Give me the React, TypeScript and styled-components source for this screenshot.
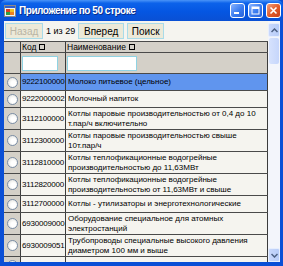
import React from 'react'
import styled, { createGlobalStyle } from 'styled-components'

const Global = createGlobalStyle`
  html, body { margin: 0; padding: 0; background: #fff; }
  body { font-family: "Liberation Sans", Arial, sans-serif; }
`

const rows = [
  { code: '9222100000', name: 'Молоко питьевое (цельное)', selected: true },
  { code: '9222000002', name: 'Молочный напиток' },
  { code: '3112100000', name: 'Котлы паровые производительностью от 0,4 до 10 т.пар/ч включительно' },
  { code: '3112300000', name: 'Котлы паровые производительностью свыше 10т.пар/ч' },
  { code: '3112810000', name: 'Котлы теплофикационные водогрейные производительностью до 11,63МВт' },
  { code: '3112820000', name: 'Котлы теплофикационные водогрейные производительностью от 11,63МВт и свыше' },
  { code: '3112700000', name: 'Котлы - утилизаторы и энерготехнологические' },
  { code: '6930009000', name: 'Оборудование специальное для атомных электростанций' },
  { code: '6930009051', name: 'Трубопроводы специальные высокого давления диаметром 100 мм и выше' },
  { code: '', name: '' },
]

const Window = styled.div`
  width: 283px;
  height: 266px;
  display: flex;
  flex-direction: column;
  background: #0a4fd6;
  overflow: hidden;
`

const TitleBar = styled.div`
  height: 21px;
  flex: none;
  display: flex;
  align-items: center;
  padding: 0 2px 0 4px;
  gap: 3px;
  background: linear-gradient(#4a94f8 0%, #0c62ea 15%, #0556e2 55%, #0a50d4 100%);
  border-radius: 6px 6px 0 0;
`

const Title = styled.div`
  flex: 1;
  color: #fff;
  font-family: "Liberation Sans", Arial, sans-serif;
  font-weight: bold;
  font-size: 10px;
  letter-spacing: -0.45px;
  text-shadow: 1px 1px 0 #0b2f8a;
  white-space: nowrap;
`

const CaptionButton = styled.div<{ $close?: boolean }>`
  width: 15px;
  height: 15px;
  flex: none;
  border: 1px solid #fff;
  border-radius: 3px;
  box-sizing: border-box;
  background: ${(p) =>
    p.$close
      ? 'linear-gradient(135deg, #f0a080, #e05a28 55%, #c8401a)'
      : 'linear-gradient(135deg, #8ab4ff, #3a7cf0 55%, #2a62d8)'};
  display: flex;
  align-items: center;
  justify-content: center;
`

const Body = styled.div`
  flex: 1;
  display: flex;
  padding: 0 3px 4px 4px;
  min-height: 0;
`

const Content = styled.div`
  flex: 1;
  background: #f5f4ef;
  display: flex;
  flex-direction: column;
  min-width: 0;
`

const Toolbar = styled.div`
  height: 20px;
  flex: none;
  display: flex;
  align-items: center;
  padding: 0 0 0 1px;
  gap: 3px;
`

const ToolButton = styled.div<{ $disabled?: boolean; $w: number }>`
  width: ${(p) => p.$w}px;
  height: 16px;
  box-sizing: border-box;
  border: 1px solid #a9dbe8;
  background: #ece9d8;
  color: ${(p) => (p.$disabled ? '#b9b4a4' : '#000')};
  font-size: 10px;
  display: flex;
  align-items: center;
  justify-content: center;
`

const Counter = styled.span`
  font-size: 9px;
  color: #000;
  white-space: nowrap;
`

const Grid = styled.div`
  flex: 1;
  overflow: hidden;
  background: #f5f4ef;
  font-size: 8px;
  color: #000;
  border-top: 1px solid #4a4a4a;
`

const Row = styled.div<{ $h?: number }>`
  display: grid;
  grid-template-columns: 17px 45px 202px;
  border-bottom: 1px solid #4a4a4a;
  min-height: ${(p) => p.$h ?? 16}px;
`

const HeadCell = styled.div`
  background: #d4d0c8;
  border-right: 1px solid #3c3c3c;
  display: flex;
  align-items: center;
  padding-left: 1px;
  gap: 3px;
  font-size: 8.5px;
  line-height: 10px;
  white-space: nowrap;
`

const SortBox = styled.span`
  width: 6px;
  height: 6px;
  box-sizing: border-box;
  border: 1px solid #000;
`

const FilterCell = styled.div`
  background: #d4d0c8;
  border-right: 1px solid #3c3c3c;
  display: flex;
  align-items: center;
  padding-left: 1px;
`

const FilterInput = styled.div<{ $w: number }>`
  width: ${(p) => p.$w}px;
  height: 15px;
  box-sizing: border-box;
  border: 1px solid #8fd3e3;
  background: #fff;
`

const RowHeader = styled.div`
  background: #d4d0c8;
  border-right: 1px solid #3c3c3c;
  display: flex;
  align-items: center;
  justify-content: center;
`

const Radio = styled.span`
  width: 11px;
  height: 11px;
  border-radius: 50%;
  box-sizing: border-box;
  border: 1px solid #7b8ea6;
  background: radial-gradient(circle at 60% 60%, #fff 30%, #dcdcd6 100%);
`

const Cell = styled.div<{ $selected?: boolean }>`
  background: ${(p) => (p.$selected ? '#6095ee' : '#f5f4ef')};
  border-right: 1px solid #3c3c3c;
  padding: 0 2px;
  line-height: 10px;
  display: flex;
  align-items: center;
  white-space: pre-wrap;
`

const CodeCell = styled(Cell)`
  padding: 0 0 0 1px;
  letter-spacing: -0.2px;
`

const Scrollbar = styled.div`
  width: 12px;
  flex: none;
  background: #f3f5fb;
  display: flex;
  flex-direction: column;
  padding-top: 2px;
`

const ScrollButton = styled.div`
  height: 14px;
  flex: none;
  background: linear-gradient(90deg, #c9d8fc, #b7ccf8);
  border: 1px solid #e6eefe;
  border-radius: 2px;
  box-sizing: border-box;
  display: flex;
  align-items: center;
  justify-content: center;
`

const Thumb = styled.div`
  height: 26px;
  margin: 1px 1px 0;
  background: linear-gradient(90deg, #d6e2fd, #c6d6fb);
  border-radius: 2px;
`

const Track = styled.div`
  flex: 1;
`

const Chevron = ({ up }: { up?: boolean }) => (
  <svg width="7" height="5" viewBox="0 0 7 5">
    <path d={up ? 'M0.5 4 L3.5 1 L6.5 4' : 'M0.5 1 L3.5 4 L6.5 1'} stroke="#4d6185" strokeWidth="1.5" fill="none" />
  </svg>
)

const AppIcon = () => (
  <svg width="12" height="12" viewBox="0 0 12 12">
    <rect x="0.5" y="0.5" width="11" height="11" fill="#f4f4f4" stroke="#8a8a8a" />
    <rect x="1" y="1" width="10" height="2" fill="#2f5fd0" />
    <rect x="2" y="4" width="4" height="3" fill="#e04020" />
    <rect x="6" y="4" width="4" height="3" fill="#f0c020" />
    <rect x="2" y="7" width="4" height="3" fill="#30a040" />
    <rect x="6" y="7" width="4" height="3" fill="#f08020" />
  </svg>
)

export default function App() {
  const heightOf = (name: string) => (name.length > 45 ? 21 : 16)
  return (
    <>
      <Global />
      <Window>
        <TitleBar>
          <AppIcon />
          <Title>Приложение по 50 строке</Title>
          <CaptionButton>
            <svg width="9" height="9" viewBox="0 0 9 9">
              <rect x="1" y="6" width="5" height="2" fill="#fff" />
            </svg>
          </CaptionButton>
          <CaptionButton>
            <svg width="9" height="9" viewBox="0 0 9 9">
              <rect x="1" y="1" width="7" height="7" fill="none" stroke="#fff" />
              <rect x="1" y="1" width="7" height="2" fill="#fff" />
            </svg>
          </CaptionButton>
          <CaptionButton $close>
            <svg width="9" height="9" viewBox="0 0 9 9">
              <path d="M1.5 1.5 L7.5 7.5 M7.5 1.5 L1.5 7.5" stroke="#fff" strokeWidth="1.6" />
            </svg>
          </CaptionButton>
        </TitleBar>
        <Body>
          <Content>
            <Toolbar>
              <ToolButton $w={38} $disabled>
                Назад
              </ToolButton>
              <Counter>1 из 29</Counter>
              <ToolButton $w={46}>Вперед</ToolButton>
              <ToolButton $w={37}>Поиск</ToolButton>
            </Toolbar>
            <Grid>
              <Row $h={10}>
                <HeadCell />
                <HeadCell>
                  Код <SortBox />
                </HeadCell>
                <HeadCell>
                  Наименование <SortBox />
                </HeadCell>
              </Row>
              <Row $h={20}>
                <FilterCell />
                <FilterCell>
                  <FilterInput $w={36} />
                </FilterCell>
                <FilterCell>
                  <FilterInput $w={70} />
                </FilterCell>
              </Row>
              {rows.map((r, i) => (
                <Row key={i} $h={heightOf(r.name)}>
                  <RowHeader>
                    <Radio />
                  </RowHeader>
                  <CodeCell $selected={r.selected}>{r.code}</CodeCell>
                  <Cell $selected={r.selected}>{r.name}</Cell>
                </Row>
              ))}
            </Grid>
          </Content>
          <Scrollbar>
            <ScrollButton>
              <Chevron up />
            </ScrollButton>
            <Thumb />
            <Track />
            <ScrollButton>
              <Chevron />
            </ScrollButton>
          </Scrollbar>
        </Body>
      </Window>
    </>
  )
}
